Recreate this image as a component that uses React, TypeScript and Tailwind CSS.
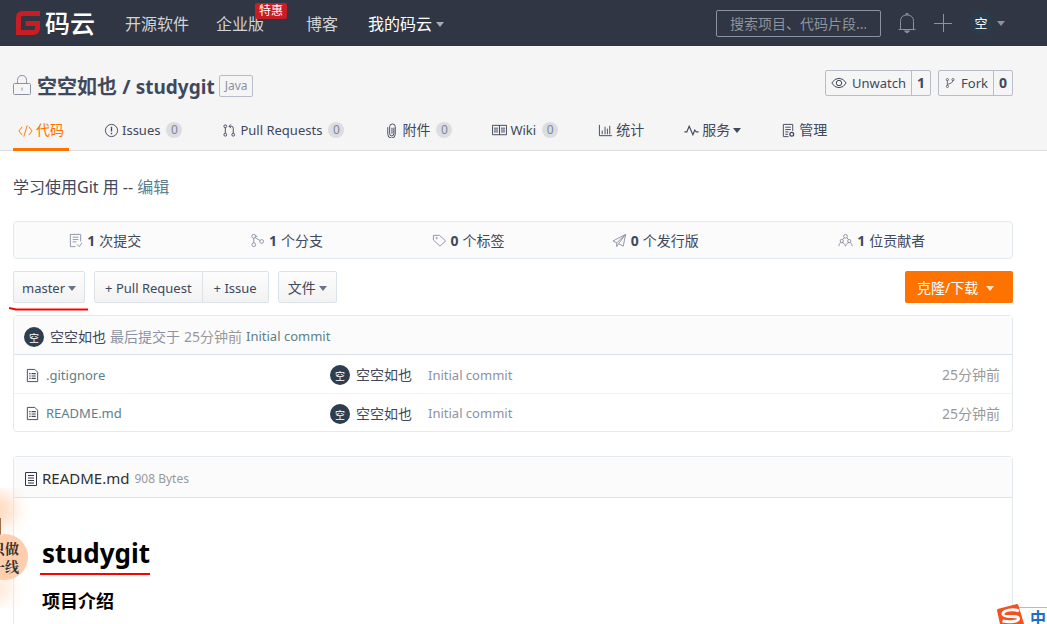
import type { ReactNode } from "react";
import clsx from "clsx";

type IconProps = { className?: string; children: ReactNode };

function Icon({ className, children }: IconProps) {
  return (
    <svg
      viewBox="0 0 16 16"
      className={clsx("shrink-0", className ?? "h-4 w-4")}
      fill="none"
      stroke="currentColor"
      strokeWidth="1"
      aria-hidden="true"
    >
      {children}
    </svg>
  );
}

function Caret({ className }: { className?: string }) {
  return (
    <svg viewBox="0 0 8 5" className={clsx("h-[5px] w-2 shrink-0", className)} fill="currentColor" aria-hidden="true">
      <path d="M0 0h8L4 5z" />
    </svg>
  );
}

function Avatar({ large }: { large?: boolean }) {
  return (
    <span
      className={clsx(
        "flex shrink-0 items-center justify-center rounded-full leading-none text-white",
        large ? "h-6 w-6 bg-[#2a3c4c] text-[13px]" : "h-5 w-5 bg-[#2c3e50] pt-[2px] text-[10px]"
      )}
    >
      空
    </span>
  );
}

const icons = {
  code: <path d="M4.5 4L1 8.5 4.5 13M11.5 4L15 8.5 11.5 13M9.8 2.5L6.2 14.5" />,
  issues: (
    <>
      <circle cx="8" cy="8" r="6.5" />
      <path d="M8 4v5M8 10.5v1.5" strokeWidth="1.4" />
    </>
  ),
  pull: (
    <>
      <circle cx="3.5" cy="3.5" r="1.5" />
      <circle cx="3.5" cy="12.5" r="1.5" />
      <circle cx="12" cy="12.5" r="1.5" />
      <path d="M3.5 5v6M12 11V5.5q0-2-2-2H7.5M9.5 1.5l-2 2 2 2" />
    </>
  ),
  clip: <path d="M10.5 5v6.5a2 2 0 0 1-4.500 0V4a3 3 0 0 1 6 0v8a4 4 0 0 1-8 0V4.500M8.500 5v6.500" />,
  wiki: <path d="M.5 2.500h7.500v10H.5zM8 2.500h7.500v10H8zM2 5.500h4.500M2 7.500h4.500M2 9.500h4.500M9.500 5.500h4.500M9.500 7.500h4.500M9.500 9.500h4.500" />,
  chart: <path d="M1.500 2v11.500H15M4.500 12V8M7.500 12V4M10 12V6M12.500 12V3" />,
  pulse: <path d="M.5 9.500H3l2.500-6 4 9 2-5 1.500 2h2.500" strokeWidth="1.2" />,
  manage: (
    <>
      <path d="M8 14.500H2.500v-13h10v7M4.500 4.500h6M4.500 7h6M4.500 9.500H8M4.500 12h3" />
      <circle cx="11.500" cy="12" r="2" strokeWidth="1.400" />
    </>
  ),
  commits: <path d="M13.500 9V1.500h-11v13H8M5 4.500h6M5 7h6M5 9.500h4M9.500 12l2.500 2.500 3-4" />,
  branches: (
    <>
      <circle cx="4" cy="3.500" r="2" />
      <circle cx="4" cy="12.500" r="2" />
      <circle cx="12.500" cy="9" r="2" />
      <path d="M4 5.500v5M5.500 5l5.200 3M6 3.500h2" />
    </>
  ),
  tag: (
    <>
      <path d="M1.500 2.500v5l7 6.500 6-5.500-6.500-6z" />
      <circle cx="5" cy="5.500" r=".7" />
    </>
  ),
  plane: <path d="M14.500 1.500L1 8.500l4 2L14.500 1.500 7 11.500l5 2.500zM5 10.500v4l2-3" />,
  people: (
    <>
      <circle cx="8" cy="3.500" r="2" />
      <circle cx="4" cy="8.500" r="1.700" />
      <circle cx="12" cy="8.500" r="1.700" />
      <path d="M6.500 5L5 7M9.500 5L11 7M1 14c0-2.500 1-3.800 3-3.800S7 11.500 8 14c1-2.500 2-3.800 4-3.800s3 1.300 3 3.800" />
    </>
  ),
  eye: (
    <>
      <path d="M.8 8Q3.500 3.300 8 3.300T15.200 8Q12.500 12.700 8 12.700T.8 8z" />
      <circle cx="8" cy="8" r="2.700" />
    </>
  ),
  fork: (
    <>
      <circle cx="4.500" cy="3.500" r="1.500" />
      <circle cx="12" cy="3.500" r="1.500" />
      <circle cx="4.500" cy="12.500" r="1.500" />
      <path d="M4.500 5v6M12 5q0 3-7.500 5" />
    </>
  ),
  file: (
    <>
      <path d="M2.500 1.500h8l3 3v10h-11z" />
      <path d="M4.500 6h1.500M7 6h4.500M4.500 8.500h1.500M7 8.500h4.500M4.500 11h1.500M7 11h4.500" strokeWidth="1.200" />
    </>
  ),
  readme: <path d="M2.500 1.500h11v13h-11zM5 4.500h6M5 7h6M5 9.500h6M5 12h6" />,
};

type Tab = { icon: ReactNode; label: string; latin?: boolean; count?: number; caret?: boolean; active?: boolean };

const tabs: Tab[] = [
  { icon: icons.code, label: "代码", active: true },
  { icon: icons.issues, label: "Issues", latin: true, count: 0 },
  { icon: icons.pull, label: "Pull Requests", latin: true, count: 0 },
  { icon: icons.clip, label: "附件", count: 0 },
  { icon: icons.wiki, label: "Wiki", latin: true, count: 0 },
  { icon: icons.chart, label: "统计" },
  { icon: icons.pulse, label: "服务", caret: true },
  { icon: icons.manage, label: "管理" },
];

const stats = [
  { icon: icons.commits, count: 1, label: "次提交" },
  { icon: icons.branches, count: 1, label: "个分支" },
  { icon: icons.tag, count: 0, label: "个标签" },
  { icon: icons.plane, count: 0, label: "个发行版" },
  { icon: icons.people, count: 1, label: "位贡献者" },
];

const files = [".gitignore", "README.md"];

function Header() {
  return (
    <header className="flex h-[46px] shrink-0 items-center bg-[#303643] pr-[42px] pl-4 text-base text-[#d0d3d8]">
      <a href="#" className="flex w-[109px] items-center gap-[5px] text-[25px] leading-none font-medium text-white">
        <svg viewBox="0 0 24 24" className="h-6 w-6 shrink-0" fill="none" stroke="#c71d23" strokeWidth="5" aria-hidden="true">
          <path d="M24 2.500H7Q2.500 2.500 2.500 7v14.500h14.500q4.500 0 4.500-4.500v-4.500H9.500" />
        </svg>
        码云
      </a>
      <nav className="flex items-center pt-[2px]">
        <a href="#" className="w-[91px]">开源软件</a>
        <a href="#" className="relative w-[90px]">
          企业版
          <span className="absolute -top-[9px] left-[39px] flex h-4 w-8 items-center justify-center rounded-xs bg-[#c71d23] text-xs text-white">
            特惠
          </span>
        </a>
        <a href="#" className="w-[62px]">博客</a>
        <a href="#" className="flex items-center gap-1 whitespace-nowrap text-white">
          我的码云
          <Caret className="text-[#a9acb3]" />
        </a>
      </nav>
      <input
        type="search"
        aria-label="搜索"
        placeholder="搜索项目、代码片段..."
        className="ml-auto h-[27px] w-[165px] rounded-xs border border-[#8c92a4] bg-transparent pl-[13px] text-sm text-white placeholder:text-[#8f939c]"
      />
      <button type="button" aria-label="通知" className="ml-4 text-[#8c92a4]">
        <svg viewBox="0 0 20 22" className="h-[22px] w-5" fill="none" stroke="currentColor" aria-hidden="true">
          <path d="M1.500 17.500h17M3.500 17.500V9.500Q3.500 3 10 3t6.500 6.500v8M9 3V1.500h2V3" />
          <path d="M7.500 19h5L10 21z" fill="currentColor" />
        </svg>
      </button>
      <button type="button" aria-label="新建" className="ml-4 text-[#8c92a4]">
        <svg viewBox="0 0 20 20" className="h-5 w-5" stroke="currentColor" aria-hidden="true">
          <path d="M1 10.500h18M10.500 1v18" />
        </svg>
      </button>
      <button type="button" aria-label="用户菜单" className="ml-4 flex items-center gap-1 text-[#8c92a4]">
        <Avatar large />
        <Caret />
      </button>
    </header>
  );
}

function RepoHeader() {
  return (
    <div className="h-[105px] shrink-0 border-b border-[#dcdddf] bg-[#f5f5f5] pr-[34px] pl-[13px]">
      <div className="flex h-20 items-center">
        <svg viewBox="0 0 20 22" className="h-[22px] w-5 shrink-0" fill="none" stroke="#8c92a4" aria-hidden="true">
          <rect x=".5" y="8.500" width="17" height="11" rx="1" />
          <path d="M4.500 8.500V5.500Q4.500 .5 9 .5t4.500 5v3M9 12.500v3" />
        </svg>
        <h1 className="ml-1 pt-px text-xl font-bold whitespace-nowrap">
          <a href="#">空空如也</a> / <a href="#" className="text-[19px]">studygit</a>
        </h1>
        <span className="ml-1 flex h-[22px] items-center rounded-xs border border-[#b9bccb] px-[5px] text-xs text-[#8c92a4]">
          Java
        </span>
        <div className="ml-auto flex gap-[7px] pb-[6px] text-[13px]">
          <div className="flex h-[26px] rounded-xs border border-[#b9bccb]">
            <button type="button" className="flex items-center gap-[5px] px-[5px]">
              <Icon>{icons.eye}</Icon>
              Unwatch
            </button>
            <a href="#" className="flex w-[19px] items-center justify-center border-l border-[#b9bccb] text-sm font-bold">1</a>
          </div>
          <div className="flex h-[26px] rounded-xs border border-[#b9bccb]">
            <button type="button" className="flex items-center gap-[5px] px-[5px]">
              <Icon className="h-3 w-3">{icons.fork}</Icon>
              Fork
            </button>
            <a href="#" className="flex w-[19px] items-center justify-center border-l border-[#b9bccb] text-sm font-bold">0</a>
          </div>
        </div>
      </div>
      <nav className="flex h-[25px] gap-[30px]">
        {tabs.map((tab) => (
          <a
            key={tab.label}
            href="#"
            className={clsx(
              "-mt-4 flex h-[41px] items-center gap-[3px] border-b-3 px-[5px] pt-[2px] whitespace-nowrap",
              tab.active ? "border-[#fe7300] text-[#fe7300]" : "border-transparent",
              tab.latin ? "text-[13px]" : "text-sm"
            )}
          >
            <Icon className="h-[15px] w-[15px]">{tab.icon}</Icon>
            {tab.label}
            {tab.caret && <Caret />}
            {tab.count !== undefined && (
              <span className="ml-[3px] flex h-4 w-4 items-center justify-center rounded-full bg-[#dcdddf] text-xs text-[#7d85a3]">
                {tab.count}
              </span>
            )}
          </a>
        ))}
      </nav>
    </div>
  );
}

function Toolbar() {
  const button =
    "flex h-8 items-center gap-[3px] border border-[#dce3e8] bg-linear-to-b from-[#fdfdfd] to-[#f2f2f2] pt-[2px] whitespace-nowrap";

  return (
    <div className="mt-3 flex text-[13px]">
      <div className="relative">
        <button type="button" className={clsx(button, "rounded-xs px-2")}>
          master
          <Caret className="text-[#6b7386]" />
        </button>
        <svg viewBox="0 0 80 4" className="absolute top-9 -left-1 h-1 w-20" fill="none" stroke="#f00" strokeWidth="2" aria-hidden="true">
          <path d="M0 1l7 1.500h72" />
        </svg>
      </div>
      <div className="ml-[9px] flex">
        <button type="button" className={clsx(button, "rounded-l-xs px-[10px]")}>+ Pull Request</button>
        <button type="button" className={clsx(button, "rounded-r-xs border-l-0 px-[11px]")}>+ Issue</button>
      </div>
      <button type="button" className={clsx(button, "ml-[9px] rounded-xs px-[9px] text-sm")}>
        文件
        <Caret className="text-[#6b7386]" />
      </button>
      <button type="button" className="ml-auto flex h-8 w-[108px] items-center gap-2 rounded-xs bg-[#fe7300] pt-[2px] pl-3 text-sm whitespace-nowrap text-white">
        克隆/下载
        <Caret className="text-[#ffe3cc]" />
      </button>
    </div>
  );
}

function FileTree() {
  return (
    <section className="mt-3 rounded-sm border border-[#e3e9ed]">
      <div className="flex h-[39px] items-center border-b border-[#dce3e8] bg-[#fbfbfb] pt-[3px] pl-[10px] text-sm whitespace-nowrap">
        <Avatar />
        <a href="#" className="ml-[6px]">空空如也</a>
        <span className="ml-1 text-[#8c92a4]">最后提交于</span>
        <span className="ml-1 text-[#999]">25分钟前</span>
        <a href="#" className="ml-1 text-[13px] text-[#5c7f8b]">Initial commit</a>
      </div>
      <table className="w-full table-fixed text-[13px]">
        <colgroup>
          <col className="w-[316px]" />
          <col className="w-[98px]" />
          <col />
          <col className="w-[120px]" />
        </colgroup>
        <tbody>
          {files.map((name) => (
            <tr key={name} className="h-[38px] border-b border-[#f0f3f4] last:border-b-0">
              <td className="pt-[3px] pl-[11px]">
                <a href="#" className="flex items-center gap-[6px] text-[#5c7f8b]">
                  <Icon className="h-[15px] w-[15px] text-[#40485b]">{icons.file}</Icon>
                  {name}
                </a>
              </td>
              <td className="pt-[3px]">
                <a href="#" className="flex items-center gap-[6px] text-sm">
                  <Avatar />
                  空空如也
                </a>
              </td>
              <td className="pt-[3px] text-[#8c92a4]">Initial commit</td>
              <td className="pt-[3px] pr-3 text-right text-sm text-[#999]">25分钟前</td>
            </tr>
          ))}
        </tbody>
      </table>
    </section>
  );
}

function Readme() {
  return (
    <section className="mt-6 flex-1 rounded-t-sm border border-b-0 border-[#e3e9ed]">
      <div className="flex h-[41px] items-center border-b border-[#dce3e8] bg-[#fbfbfb] pt-1 pl-[9px]">
        <Icon className="h-4 w-4 text-[#303643]">{icons.readme}</Icon>
        <span className="ml-[3px] text-[15px] text-[#303030]">README.md</span>
        <span className="ml-[5px] text-xs text-[#999]">908 Bytes</span>
      </div>
      <article className="pt-[35px] pl-7 text-black">
        <h1 className="relative inline-block text-[26px] leading-10 font-bold">
          studygit
          <span className="absolute top-10 -left-[2px] h-[2px] w-[110px] bg-[#f00]" />
        </h1>
        <h2 className="mt-[14px] text-lg leading-7 font-bold">项目介绍</h2>
      </article>
    </section>
  );
}

function SideBadge() {
  return (
    <aside className="absolute top-[488px] left-0 h-[120px] w-8 overflow-hidden">
      <div className="absolute top-1 -left-5 h-9 w-9 rounded-full bg-[#ffdcc4] blur-sm" />
      <div className="absolute top-[84px] -left-6 h-8 w-9 rounded-full bg-[#ffe8d8] blur-sm" />
      <div className="absolute top-[30px] left-0 h-5 w-px bg-[#a0694a]" />
      <div className="absolute top-[46px] -left-[18px] flex h-[46px] w-[46px] flex-col items-end justify-center rounded-full bg-[#ffcfad] pr-[9px] font-[Noto_Serif_CJK_SC,Noto_Sans_CJK_SC,serif] text-sm leading-[18px] font-bold text-[#303030]">
        <span className="whitespace-nowrap">只做</span>
        <span className="whitespace-nowrap">一线</span>
      </div>
    </aside>
  );
}

function InputMethodBar() {
  return (
    <div className="absolute right-0 bottom-0 flex h-5 w-[50px] overflow-hidden">
      <svg viewBox="0 0 30 20" className="z-10 h-5 w-[30px] shrink-0" aria-hidden="true">
        <path d="M0 6.500Q0 5 1.500 4.700L19 .2q2-.5 2.500 1.300L27 20H3z" fill="#f4511e" />
        <path d="M22 7C17 4.500 5 6 6 10.500c1 4 15 0 15.500 4 .3 3-9 4-16 2.500" fill="none" stroke="#fff" strokeWidth="3" />
      </svg>
      <div className="mt-[3px] -ml-[10px] flex-1 border-t border-[#aebccb] bg-white pl-[13px] text-base leading-5 font-bold text-[#1c6fc4]">
        中
      </div>
    </div>
  );
}

export default function App() {
  return (
    <div className="relative flex h-screen flex-col overflow-hidden bg-white font-[Noto_Sans,Noto_Sans_CJK_SC,sans-serif] text-sm text-[#40485b]">
      <Header />
      <RepoHeader />
      <main className="flex flex-1 flex-col pr-[34px] pl-[13px]">
        <p className="mt-6 text-base leading-6">
          学习使用Git 用 -- <a href="#" className="text-[#5c7f8b]">编辑</a>
        </p>
        <ul className="mt-[22px] grid h-[38px] grid-cols-[182fr_182fr_182fr_193fr_261fr] items-center rounded-sm border border-[#e3e9ed] bg-[#fbfbfb] pt-px">
          {stats.map((stat) => (
            <li key={stat.label}>
              <a href="#" className="flex items-center justify-center gap-1 whitespace-nowrap">
                <Icon className="h-[15px] w-[15px] text-[#8c92a4]">{stat.icon}</Icon>
                <b>{stat.count}</b>
                {stat.label}
              </a>
            </li>
          ))}
        </ul>
        <Toolbar />
        <FileTree />
        <Readme />
      </main>
      <SideBadge />
      <InputMethodBar />
    </div>
  );
}
